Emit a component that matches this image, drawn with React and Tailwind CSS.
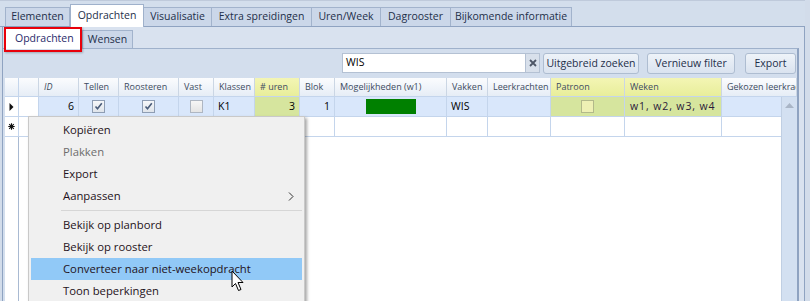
import React from "react";

const cols = [
  { w: "w-[14px]", key: "ind" },
  { w: "w-[20px]", key: "e" },
  { w: "w-[40px]", label: "ID", italic: true },
  { w: "w-[40px]", label: "Tellen" },
  { w: "w-[60px]", label: "Roosteren" },
  { w: "w-[35px]", label: "Vast" },
  { w: "w-[41px]", label: "Klassen" },
  { w: "w-[45px]", label: "# uren", yellow: true },
  { w: "w-[35px]", label: "Blok" },
  { w: "w-[112px]", label: "Mogelijkheden (w1)" },
  { w: "w-[41px]", label: "Vakken" },
  { w: "w-[63px]", label: "Leerkrachten" },
  { w: "w-[74px]", label: "Patroon", yellow: true },
  { w: "w-[97px]", label: "Weken", yellow: true },
  { w: "w-[75px]", label: "Gekozen leerkrachten" },
];

function Check({ checked, variant }) {
  const box =
    variant === "yellow"
      ? "border-[#b2b98a] bg-[#eef0b4]"
      : checked
      ? "border-[#8e9db3] bg-gradient-to-b from-[#f7f8fa] to-[#dfe4ea]"
      : "border-[#aeb6c2] bg-gradient-to-b from-[#f6f6f6] to-[#e4e4e4]";
  return (
    <div className={`w-[13px] h-[13px] border ${box} flex items-center justify-center`}>
      {checked && (
        <svg width="9" height="9" viewBox="0 0 9 9">
          <path d="M1.5 4.5 L3.5 6.8 L7.8 1.2" fill="none" stroke="#4b5d7a" strokeWidth="1.6" />
        </svg>
      )}
    </div>
  );
}

function TopTab({ label, w, active }) {
  return active ? (
    <div className={`${w} h-[23px] bg-white border border-b-0 border-[#9fb1cb] -mb-px flex items-center justify-center text-[10.5px] text-[#1e2f4a]`}>
      {label}
    </div>
  ) : (
    <div className={`${w} h-[19px] bg-[#cbd7e9] border border-b-0 border-l-0 first:border-l border-[#a2b3cc] flex items-center justify-center text-[10.5px] text-[#1e2f4a]`}>
      {label}
    </div>
  );
}

function Btn({ children, w }) {
  return (
    <div className={`${w} h-[21px] rounded-[3px] border border-[#aebdd1] bg-gradient-to-b from-[#eef3f9] to-[#dae3ef] flex items-center justify-center text-[10.5px] text-[#1e2f4a]`}>
      {children}
    </div>
  );
}

const cellBase = "h-full border-r border-[#c4d5ec] shrink-0 flex items-center overflow-hidden whitespace-nowrap";

export default function App() {
  return (
    <div className="w-[810px] h-[301px] overflow-hidden bg-[#d2dcea] relative font-['Open_Sans','Liberation_Sans',sans-serif]">
      {/* top tabs */}
      <div className="h-[27px] w-[805px] flex items-end pl-[5px] border-b border-[#8fa3c1] border-t border-t-[#bfcadb] bg-[#d3deec]">
        <TopTab label="Elementen" w="w-[65px]" />
        <TopTab label="Opdrachten" w="w-[74px]" active />
        <TopTab label="Visualisatie" w="w-[68px]" />
        <TopTab label="Extra spreidingen" w="w-[100px]" />
        <TopTab label="Uren/Week" w="w-[69px]" />
        <TopTab label="Dagrooster" w="w-[70px]" />
        <TopTab label="Bijkomende informatie" w="w-[121px]" />
      </div>

      {/* body */}
      <div className="ml-[2px] w-[803px] h-[274px] border-l border-r border-[#8fa3c1] bg-[#d9e2ef] flex flex-col">
        {/* sub tabs */}
        <div className="h-[21px] flex items-end pl-[2px] relative">
          <div className="w-[76px] h-[21px] bg-white -mb-px flex items-center pl-[10px] text-[10.5px] text-[#2a2a6a]">
            Opdrachten
          </div>
          <div className="ml-[1px] w-[51px] h-[18px] bg-[#cbd7e9] border border-b-0 border-[#a2b3cc] flex items-center justify-center text-[10.5px] text-[#1e2f4a]">
            Wensen
          </div>
          <div className="absolute left-[1px] top-0 w-[78px] h-[25px] border-2 border-[#e8000b] shadow-[1px_1px_2px_rgba(0,0,0,0.25)]" />
        </div>

        {/* inner panel */}
        <div className="w-[796px] flex-1 border-t border-r-2 border-[#9fb1cb] border-r-[#8fa3c1] flex flex-col bg-[#d3deed] overflow-hidden">
          {/* toolbar */}
          <div className="h-[29px] shrink-0 flex items-start pt-[4px] pl-[339px]">
            <div className="w-[184px] h-[20px] bg-white border border-[#b4c1d3] flex items-center pl-[3px] text-[10.5px] text-black">
              WIS
            </div>
            <div className="w-[14px] h-[20px] bg-[#d8e0eb] border border-l-0 border-[#b4c1d3] flex items-center justify-center">
              <svg width="8" height="8" viewBox="0 0 8 8">
                <path d="M1 1 L7 7 M7 1 L1 7" stroke="#4d5666" strokeWidth="1.8" />
              </svg>
            </div>
            <div className="ml-[3px]"><Btn w="w-[96px]">Uitgebreid zoeken</Btn></div>
            <div className="ml-[8px]"><Btn w="w-[88px]">Vernieuw filter</Btn></div>
            <div className="ml-[10px]"><Btn w="w-[51px]">Export</Btn></div>
          </div>

          {/* grid */}
          <div className="ml-[2px] flex-1 bg-white flex flex-col">
            {/* header */}
            <div className="h-[19px] shrink-0 flex border-b border-[#c4d5ec]">
              {cols.map((c, i) => (
                <div
                  key={i}
                  className={`${c.w} ${cellBase} ${i === 0 ? "border-[#a9bad2]" : "border-[#cbd6e4]"} pl-[5px] text-[9px] text-[#3d4b60] ${
                    c.yellow ? "bg-gradient-to-b from-[#f3f5b4] to-[#e8ee9a]" : "bg-gradient-to-b from-[#fbfcfe] to-[#e6edf6]"
                  } ${c.italic ? "italic" : ""}`}
                >
                  {c.label || ""}
                </div>
              ))}
            </div>
            <div className="flex-1 flex">
              <div className="w-[776px] flex flex-col">
                {/* row 1 */}
                <div className="h-[20px] flex border-b border-[#c4d5ec] text-[10.5px] text-black">
                  <div className={`w-[14px] ${cellBase} border-[#a9bad2] bg-white justify-center`}>
                    <svg width="5" height="8" viewBox="0 0 5 8"><path d="M0.5 0 L4.5 4 L0.5 8 Z" fill="#111" /></svg>
                  </div>
                  <div className={`w-[20px] ${cellBase} bg-white`} />
                  <div className={`w-[40px] ${cellBase} bg-[#d9e7fb] justify-end pr-[4px]`}>6</div>
                  <div className={`w-[40px] ${cellBase} bg-[#d9e7fb] justify-center`}><Check checked /></div>
                  <div className={`w-[60px] ${cellBase} bg-[#d9e7fb] justify-center`}><Check checked /></div>
                  <div className={`w-[35px] ${cellBase} bg-[#d9e7fb] justify-center`}><Check /></div>
                  <div className={`w-[41px] ${cellBase} bg-[#d9e7fb] pl-[4px]`}>K1</div>
                  <div className={`w-[45px] ${cellBase} bg-[#d6e59e] justify-end pr-[4px]`}>3</div>
                  <div className={`w-[35px] ${cellBase} bg-[#d9e7fb] justify-end pr-[4px]`}>1</div>
                  <div className={`w-[112px] ${cellBase} bg-[#d9e7fb] justify-center`}>
                    <div className="w-[50px] h-[15px] bg-[#008000]" />
                  </div>
                  <div className={`w-[41px] ${cellBase} bg-[#d9e7fb] pl-[4px]`}>WIS</div>
                  <div className={`w-[63px] ${cellBase} bg-[#d9e7fb]`} />
                  <div className={`w-[74px] ${cellBase} bg-[#d6e59e] justify-center`}><Check variant="yellow" /></div>
                  <div className={`w-[97px] ${cellBase} bg-[#d6e59e] pl-[5px] tracking-[0.9px] text-[#2a1a3a]`}>w1, w2, w3, w4</div>
                  <div className={`w-[59px] ${cellBase} border-r-0 bg-[#d9e7fb]`} />
                </div>
                {/* row 2 */}
                <div className="h-[20px] flex border-b border-[#c4d5ec]">
                  <div className={`w-[14px] ${cellBase} border-[#a9bad2] bg-white justify-center`}>
                    <svg width="7" height="7" viewBox="0 0 7 7">
                      <path d="M3.5 0.3 V6.7 M0.3 3.5 H6.7 M1.2 1.2 L5.8 5.8 M5.8 1.2 L1.2 5.8" stroke="#111" strokeWidth="1.1" />
                    </svg>
                  </div>
                  {[
                    "w-[20px]", "w-[40px]", "w-[40px]", "w-[60px]", "w-[35px]", "w-[41px]", "w-[45px]",
                    "w-[35px]", "w-[112px]", "w-[41px]", "w-[63px]", "w-[74px]", "w-[97px]",
                  ].map((w, i) => (
                    <div key={i} className={`${w} ${cellBase}`} />
                  ))}
                  <div className={`w-[59px] ${cellBase} border-r-0`} />
                </div>
                <div className="w-[14px] flex-1 border-r border-[#a9bad2]" />
              </div>
              {/* scrollbar */}
              <div className="w-[16px] bg-[#d3e0f1] border-l border-[#c0cfe3] flex flex-col items-center pt-[6px]">
                <svg width="9" height="5" viewBox="0 0 9 5"><path d="M0 5 L4.5 0 L9 5 Z" fill="#a9b5c6" /></svg>
              </div>
            </div>
          </div>
        </div>
      </div>

      {/* context menu */}
      <div className="absolute left-[28px] top-[116px] w-[277px] h-[200px] bg-[#f0f0f0] border border-[#c9c9c9] p-[2px] shadow-[2px_2px_3px_rgba(0,0,0,0.35)] text-[11.3px] text-[#1f1220]">
        {[
          { t: "Kopiëren" },
          { t: "Plakken", dis: true },
          { t: "Export" },
          { t: "Aanpassen", sub: true },
          { sep: true },
          { t: "Bekijk op planbord" },
          { t: "Bekijk op rooster" },
          { t: "Converteer naar niet-weekopdracht", hl: true },
          { t: "Toon beperkingen" },
        ].map((it, i) =>
          it.sep ? (
            <div key={i} className="h-[7px] flex items-center pl-[30px]">
              <div className="w-full h-px bg-[#d6d6d6]" />
            </div>
          ) : (
            <div
              key={i}
              className={`h-[22px] flex items-center pl-[32px] pr-[8px] ${it.hl ? "bg-[#91c9f7]" : ""} ${it.dis ? "text-[#6d6d6d]" : ""}`}
            >
              <span className="flex-1">{it.t}</span>
              {it.sub && (
                <svg width="6" height="9" viewBox="0 0 6 9"><path d="M1 0.5 L5 4.5 L1 8.5" fill="none" stroke="#333" strokeWidth="1" /></svg>
              )}
            </div>
          )
        )}
      </div>

      {/* mouse cursor */}
      <svg className="absolute left-[231px] top-[270px]" width="14" height="22" viewBox="0 0 14 22">
        <path d="M1 1 L1 17 L4.5 13.5 L7.5 20.5 L10 19.5 L7 12.5 L12 12.5 Z" fill="#fff" stroke="#000" strokeWidth="1" strokeLinejoin="round" />
      </svg>
    </div>
  );
}
